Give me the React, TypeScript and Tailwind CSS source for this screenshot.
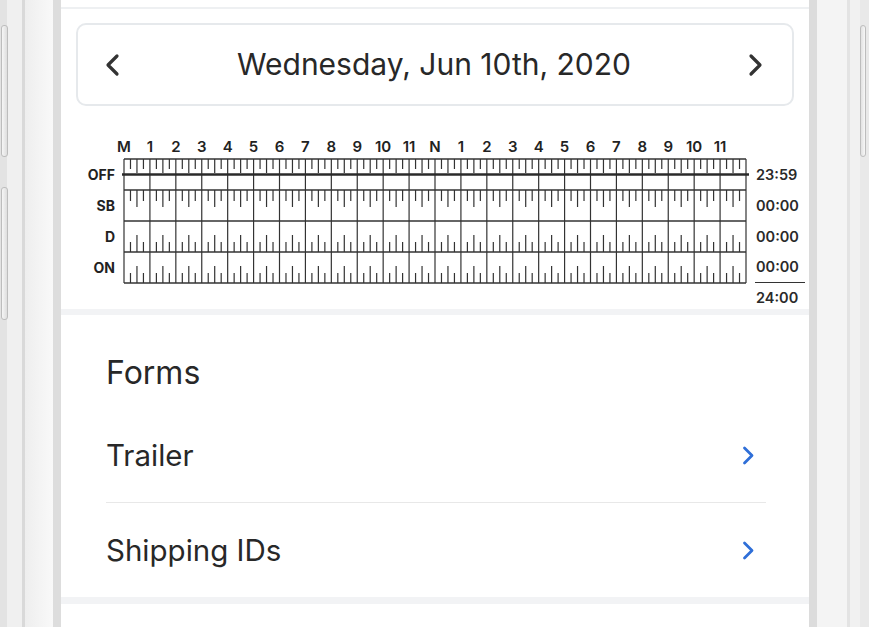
import React from "react";

const HOURS = ["M", "1", "2", "3", "4", "5", "6", "7", "8", "9", "10", "11", "N", "1", "2", "3", "4", "5", "6", "7", "8", "9", "10", "11"];
const W = 622;
const HW = W / 24;
const ROW = 31;

const LogGrid = () => {
  const ticks: React.ReactNode[] = [];
  for (let h = 0; h < 24; h++) {
    for (let q = 1; q <= 3; q++) {
      const x = (h + q / 4) * HW;
      const half = q === 2;
      // OFF row, from top
      ticks.push(<line key={`o${h}${q}`} x1={x} x2={x} y1={0} y2={half ? 14 : 10} />);
      // SB row, from top
      ticks.push(<line key={`s${h}${q}`} x1={x} x2={x} y1={ROW} y2={ROW + (half ? 17 : 11)} />);
      // D row, from bottom
      ticks.push(<line key={`d${h}${q}`} x1={x} x2={x} y1={ROW * 3} y2={ROW * 3 - (half ? 17 : 10)} />);
      // ON row, from bottom
      ticks.push(<line key={`n${h}${q}`} x1={x} x2={x} y1={ROW * 4} y2={ROW * 4 - (half ? 17 : 10)} />);
    }
  }

  return (
    <svg width={640} height={150} viewBox="-9 -24 640 150" className="overflow-visible shrink-0">
      {HOURS.map((l, i) => (
        <text
          key={i}
          x={i * HW}
          y={-7}
          textAnchor="middle"
          fontSize={15}
          fontWeight={600}
          fill="#222"
          fontFamily="Inter, sans-serif"
        >
          {l}
        </text>
      ))}
      <g stroke="#333" strokeWidth={1.2}>
        {Array.from({ length: 25 }).map((_, i) => (
          <line key={i} x1={i * HW} x2={i * HW} y1={0} y2={ROW * 4} />
        ))}
        {ticks}
      </g>
      <g stroke="#333" strokeWidth={1.5}>
        {[0, 1, 2, 3, 4].map((r) => (
          <line key={r} x1={0} x2={W} y1={r * ROW} y2={r * ROW} />
        ))}
      </g>
      {/* duty status: off all day */}
      <line x1={-2} x2={W + 3} y1={15.5} y2={15.5} stroke="#2a2a2a" strokeWidth={2.6} />
    </svg>
  );
};

const Chevron = ({ dir, className }: { dir: "left" | "right"; className?: string }) => (
  <svg width="16" height="24" viewBox="0 0 16 24" className={className}>
    <polyline
      points={dir === "left" ? "13,3 4,12 13,21" : "3,3 12,12 3,21"}
      fill="none"
      stroke="currentColor"
      strokeWidth={3.2}
      strokeLinecap="round"
      strokeLinejoin="round"
    />
  </svg>
);

const SmallChevron = () => (
  <svg width="13" height="19" viewBox="0 0 13 19" className="text-[#2f6fd8]">
    <polyline
      points="2.5,2 10,9.5 2.5,17"
      fill="none"
      stroke="currentColor"
      strokeWidth={2.8}
      strokeLinecap="round"
      strokeLinejoin="round"
    />
  </svg>
);

const LeftBezel = () => (
  <div className="relative flex h-full shrink-0">
    <div className="w-[7px] bg-[#e3e3e3]" />
    <div className="w-[15px] bg-[#f0f0f0]" />
    <div className="w-[3px] bg-[#d9d9d9]" />
    <div className="w-[28px] bg-gradient-to-r from-[#eeeeee] to-[#f9f9f9]" />
    <div className="w-[8px] bg-[#dddddd]" />
    <div className="absolute left-[1px] top-[25px] w-[7px] h-[132px] rounded-[3px] border border-[#bdbdbd] bg-gradient-to-r from-[#f6f6f6] to-[#dedede]" />
    <div className="absolute left-[1px] top-[187px] w-[7px] h-[133px] rounded-[3px] border border-[#bdbdbd] bg-gradient-to-r from-[#f6f6f6] to-[#dedede]" />
  </div>
);

const RightBezel = () => (
  <div className="relative flex h-full shrink-0">
    <div className="w-[8px] bg-[#dcdcdc]" />
    <div className="w-[30px] bg-[#f4f4f4]" />
    <div className="w-[3px] bg-[#e3e3e3]" />
    <div className="w-[10px] bg-[#f1f1f1]" />
    <div className="w-[9px] bg-[#e9e9e9]" />
    <div className="absolute left-[51px] top-[25px] w-[6px] h-[132px] rounded-[3px] border border-[#bdbdbd] bg-gradient-to-r from-[#e2e2e2] to-[#f7f7f7]" />
  </div>
);

export default function App() {
  const rows = ["OFF", "SB", "D", "ON"];
  const totals = ["23:59", "00:00", "00:00", "00:00"];

  return (
    <div className="flex w-[869px] h-[627px] overflow-hidden bg-white font-['Inter',sans-serif] text-[#282828]">
      <LeftBezel />

      <div className="flex flex-col w-[748px] shrink-0 bg-white">
        <div className="h-[7px]" />
        <div className="h-[2px] bg-[#eef0f2]" />

        {/* date selector */}
        <div className="mx-[15px] mt-[14px] h-[83px] flex items-center justify-between pl-[26px] pr-[28px] rounded-[10px] border-2 border-[#e6e9ec]">
          <Chevron dir="left" className="text-[#333]" />
          <span className="text-[30px] text-[#282828]">Wednesday, Jun 10th, 2020</span>
          <Chevron dir="right" className="text-[#333]" />
        </div>

        {/* log graph */}
        <div className="flex mt-[29px]">
          <div className="w-[54px] pt-[24px] flex flex-col items-end text-[14px] font-bold text-[#222]">
            {rows.map((r) => (
              <div key={r} className="h-[31px] flex items-center">
                {r}
              </div>
            ))}
          </div>
          <LogGrid />
          <div className="pt-[24px] flex flex-col text-[14.5px] font-semibold text-[#2a2a2a]">
            {totals.map((t, i) => (
              <div
                key={i}
                className={`h-[31px] flex items-center pl-[1px] w-[50px] ${i === 3 ? "border-b border-[#333]" : ""}`}
              >
                {t}
              </div>
            ))}
            <div className="h-[26px] pt-[7px] pl-[1px] leading-[16px]">24:00</div>
          </div>
        </div>

        <div className="h-[6px] bg-[#f2f3f5]" />

        {/* forms */}
        <div className="h-[94px] pt-[22px] pl-[45px] flex items-center text-[32px]">Forms</div>
        <div className="ml-[45px] mr-[43px] h-[94px] flex items-center justify-between border-b border-[#e8e8e8] pr-[11px]">
          <span className="text-[29.5px]">Trailer</span>
          <SmallChevron />
        </div>
        <div className="ml-[45px] mr-[43px] h-[94px] flex items-center justify-between pr-[11px]">
          <span className="text-[29.5px]">Shipping IDs</span>
          <SmallChevron />
        </div>
        <div className="h-[7px] bg-[#f2f3f5]" />
        <div className="flex-1 bg-white" />
      </div>

      <RightBezel />
    </div>
  );
}
